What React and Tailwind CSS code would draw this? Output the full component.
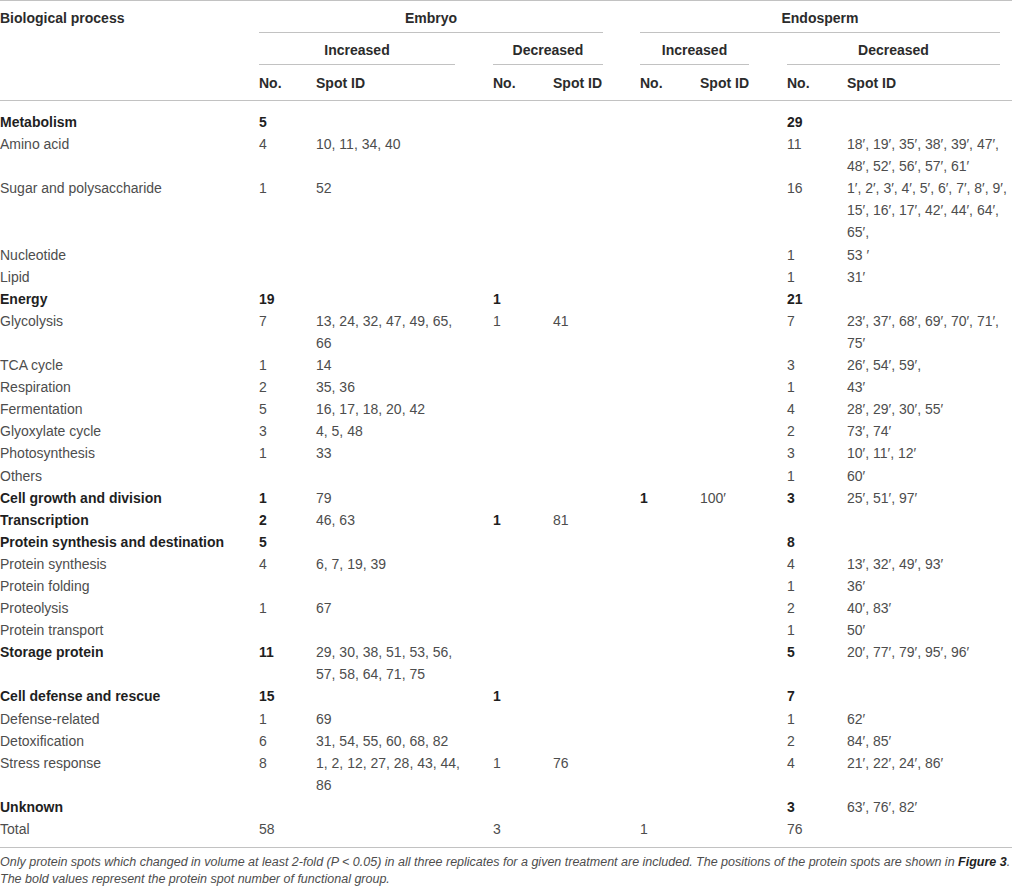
import React from 'react';

// colonnes : processus | emb+ No | emb+ Spot | emb- No | emb- Spot | end+ No | end+ Spot | end- No | end- Spot
const COLS = 'grid grid-cols-[259px_57px_177px_60px_87px_60px_87px_60px_165px]';

const rows = [
    { label: 'Metabolism', bold: true, c: [['5'], null, null, ['29']] },
    { label: 'Amino acid', c: [['4', ['10, 11, 34, 40']], null, null, ['11', ['18′, 19′, 35′, 38′, 39′, 47′,', '48′, 52′, 56′, 57′, 61′']]] },
    { label: 'Sugar and polysaccharide', c: [['1', ['52']], null, null, ['16', ['1′, 2′, 3′, 4′, 5′, 6′, 7′, 8′, 9′,', '15′, 16′, 17′, 42′, 44′, 64′,', '65′,']]] },
    { label: 'Nucleotide', c: [null, null, null, ['1', ['53 ′']]] },
    { label: 'Lipid', c: [null, null, null, ['1', ['31′']]] },
    { label: 'Energy', bold: true, c: [['19'], ['1'], null, ['21']] },
    { label: 'Glycolysis', c: [['7', ['13, 24, 32, 47, 49, 65,', '66']], ['1', ['41']], null, ['7', ['23′, 37′, 68′, 69′, 70′, 71′,', '75′']]] },
    { label: 'TCA cycle', c: [['1', ['14']], null, null, ['3', ['26′, 54′, 59′,']]] },
    { label: 'Respiration', c: [['2', ['35, 36']], null, null, ['1', ['43′']]] },
    { label: 'Fermentation', c: [['5', ['16, 17, 18, 20, 42']], null, null, ['4', ['28′, 29′, 30′, 55′']]] },
    { label: 'Glyoxylate cycle', c: [['3', ['4, 5, 48']], null, null, ['2', ['73′, 74′']]] },
    { label: 'Photosynthesis', c: [['1', ['33']], null, null, ['3', ['10′, 11′, 12′']]] },
    { label: 'Others', c: [null, null, null, ['1', ['60′']]] },
    { label: 'Cell growth and division', bold: true, c: [['1', ['79']], null, ['1', ['100′']], ['3', ['25′, 51′, 97′']]] },
    { label: 'Transcription', bold: true, c: [['2', ['46, 63']], ['1', ['81']], null, null] },
    { label: 'Protein synthesis and destination', bold: true, c: [['5'], null, null, ['8']] },
    { label: 'Protein synthesis', c: [['4', ['6, 7, 19, 39']], null, null, ['4', ['13′, 32′, 49′, 93′']]] },
    { label: 'Protein folding', c: [null, null, null, ['1', ['36′']]] },
    { label: 'Proteolysis', c: [['1', ['67']], null, null, ['2', ['40′, 83′']]] },
    { label: 'Protein transport', c: [null, null, null, ['1', ['50′']]] },
    { label: 'Storage protein', bold: true, c: [['11', ['29, 30, 38, 51, 53, 56,', '57, 58, 64, 71, 75']], null, null, ['5', ['20′, 77′, 79′, 95′, 96′']]] },
    { label: 'Cell defense and rescue', bold: true, c: [['15'], ['1'], null, ['7']] },
    { label: 'Defense-related', c: [['1', ['69']], null, null, ['1', ['62′']]] },
    { label: 'Detoxification', c: [['6', ['31, 54, 55, 60, 68, 82']], null, null, ['2', ['84′, 85′']]] },
    { label: 'Stress response', c: [['8', ['1, 2, 12, 27, 28, 43, 44,', '86']], ['1', ['76']], null, ['4', ['21′, 22′, 24′, 86′']]] },
    { label: 'Unknown', bold: true, c: [null, null, null, ['3', ['63′, 76′, 82′']]] },
    { label: 'Total', total: true, c: [['58'], ['3'], ['1'], ['76']] },
];

function Row({ row }) {
    const strong = row.bold ? 'font-bold text-[#1f1f1f]' : '';
    return (
        <div className={`${COLS} leading-[22.1px]`}>
            <div className={strong}>{row.label}</div>
            {row.c.map((cell, i) => (
                <React.Fragment key={i}>
                    <div className={strong}>{cell ? cell[0] : ''}</div>
                    <div>
                        {cell && cell[1] && cell[1].map((line, j) => <div key={j}>{line}</div>)}
                    </div>
                </React.Fragment>
            ))}
        </div>
    );
}

export default function App() {
    return (
        <div className="w-[1012px] bg-white text-[14px] text-[#4d4d4d] font-['Liberation_Sans',Arial,sans-serif]">
            <div className="border-t border-[#c2c2c2]">
                {/* header */}
                <div className={`${COLS} pt-[6px] font-bold text-[#2b2b2b] leading-[22px]`}>
                    <div>Biological process</div>
                    <div className="col-span-4 mr-[37px] pb-[3px] border-b border-[#c2c2c2] text-center">Embryo</div>
                    <div className="col-span-4 mr-[12px] pb-[3px] border-b border-[#c2c2c2] text-center">Endosperm</div>
                </div>
                <div className={`${COLS} pt-[6px] font-bold text-[#2b2b2b] leading-[22px]`}>
                    <div />
                    <div className="col-span-2 mr-[38px] pb-[3px] border-b border-[#c2c2c2] text-center">Increased</div>
                    <div className="col-span-2 mr-[37px] pb-[3px] border-b border-[#c2c2c2] text-center">Decreased</div>
                    <div className="col-span-2 mr-[38px] pb-[3px] border-b border-[#c2c2c2] text-center">Increased</div>
                    <div className="col-span-2 mr-[12px] pb-[3px] border-b border-[#c2c2c2] text-center">Decreased</div>
                </div>
                <div className={`${COLS} pt-[7px] pb-[6px] border-b border-[#c2c2c2] font-bold text-[#2b2b2b] leading-[22px]`}>
                    <div />
                    <div>No.</div>
                    <div>Spot ID</div>
                    <div>No.</div>
                    <div>Spot ID</div>
                    <div>No.</div>
                    <div>Spot ID</div>
                    <div>No.</div>
                    <div>Spot ID</div>
                </div>

                {/* body */}
                <div className="pt-[10px] pb-[7px] border-b border-[#c2c2c2]">
                    {rows.map((r, i) => <Row key={i} row={r} />)}
                </div>
            </div>

            <div className="mt-[6px] text-[12.5px] leading-[17px] italic text-[#4d4d4d]">
                <div className="whitespace-nowrap">
                    Only protein spots which changed in volume at least 2-fold (<i>P</i> &lt; 0.05) in all three replicates for a given treatment are included. The positions of the protein spots are shown in <b className="text-[#1f1f1f]">Figure 3</b>.
                </div>
                <div>The bold values represent the protein spot number of functional group.</div>
            </div>
        </div>
    );
}
